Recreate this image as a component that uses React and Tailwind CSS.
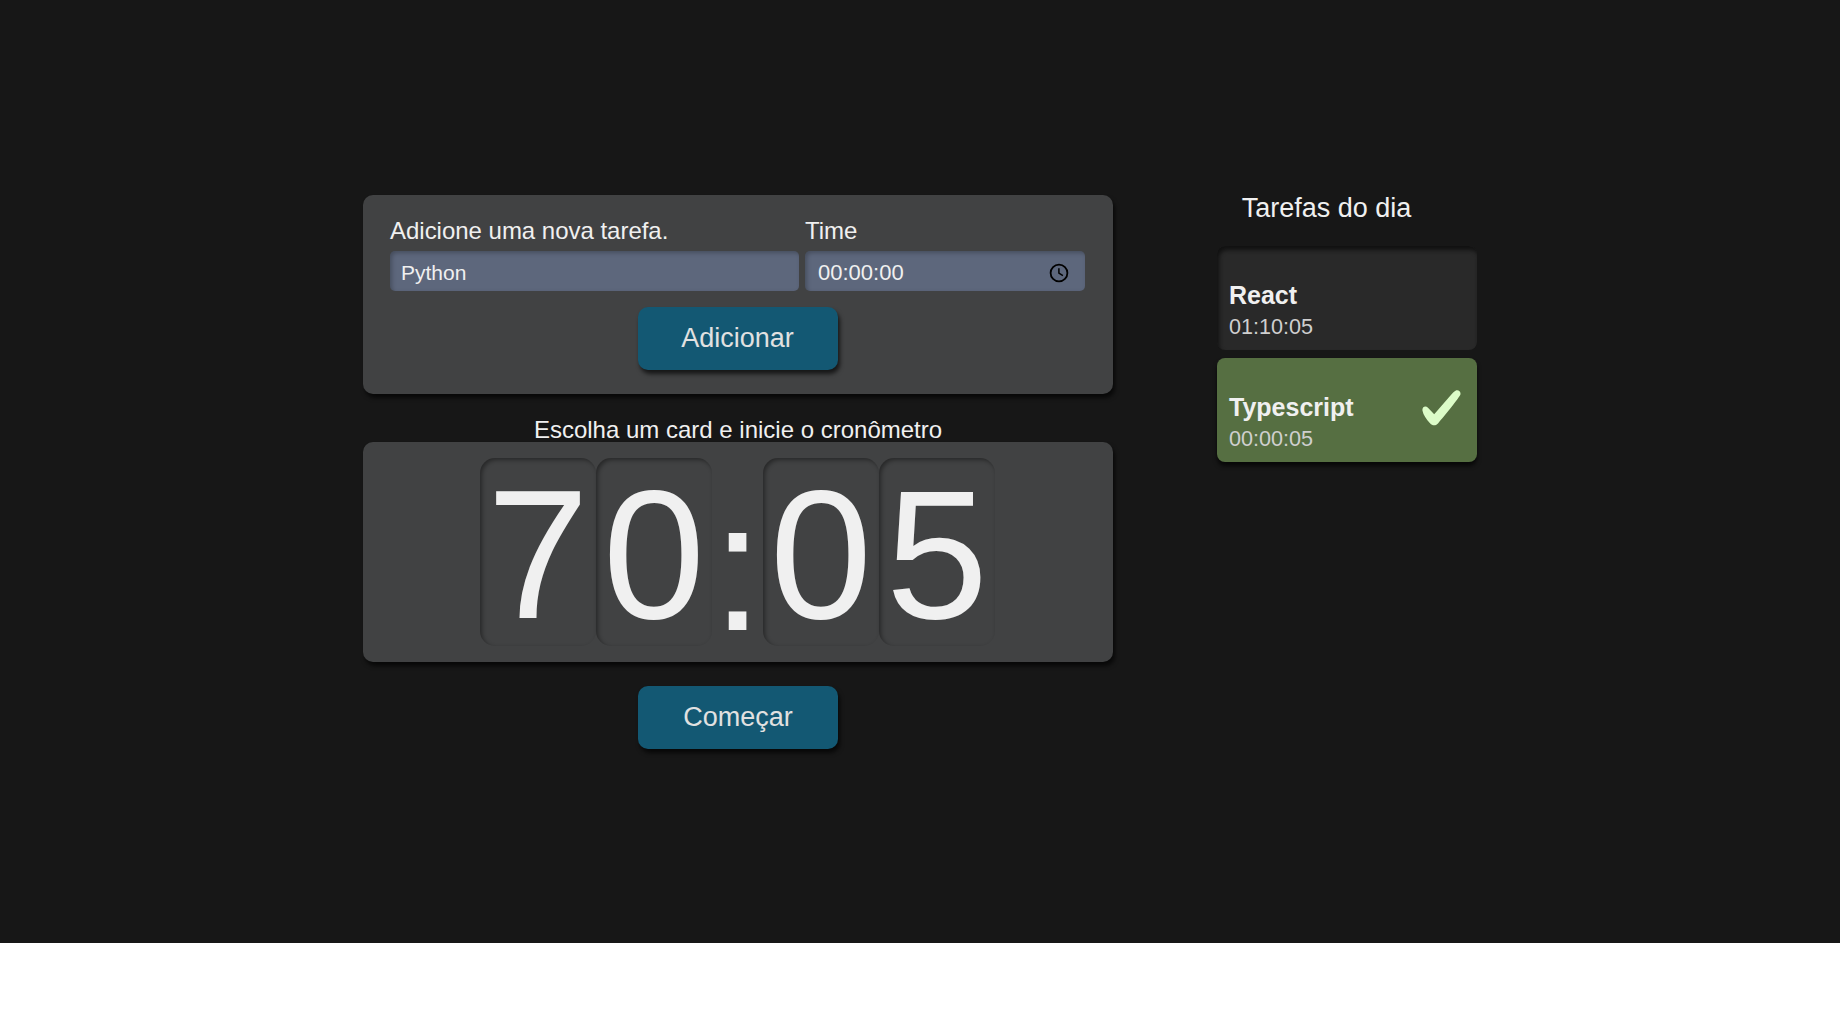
const tasks = [
  { name: 'React', time: '01:10:05', done: false },
  { name: 'Typescript', time: '00:00:05', done: true },
];

function ClockIcon() {
  return (
    <svg className="mt-1 h-5 w-5" viewBox="0 0 20 20" fill="none" stroke="#000" strokeWidth="1.8">
      <circle cx="10" cy="10" r="8.4" />
      <path d="M9.900 5.200v5l4 2.500" strokeWidth="1.5" />
    </svg>
  );
}

function CheckIcon() {
  return (
    <svg className="mt-[-5px] h-9 w-[39px]" viewBox="0 0 39 36" fill="#dcfcc8">
      <path d="M33.500 .8C36.200-.6 39.200 1.600 38.400 4.600C37.600 7.200 22 27 16 33.400C13.400 36 10.600 36 8 33.300C4.300 29.200 1.300 25 .5 20.800C-.2 17 3.400 15.300 6 17.800L12.200 24.200L30 3.800C31.200 2.400 32.200 1.400 33.500 .8Z" />
    </svg>
  );
}

function Button({ children }) {
  return (
    <button className="h-[63px] w-[200px] rounded-[10px] bg-[#135873] pb-px text-[27px] leading-8 text-[#e1e1e1] shadow-[2px_4px_4px_rgba(0,0,0,0.66)]">
      {children}
    </button>
  );
}

function Digit({ children }) {
  return (
    <span className="flex h-[188px] w-[116px] justify-center rounded-[15px] pt-0.5 shadow-[inset_2px_2px_4px_rgba(0,0,0,0.4)]">
      {children}
    </span>
  );
}

function Task({ name, time, done }) {
  return (
    <li
      className={
        done
          ? 'flex h-[104px] items-center justify-between rounded-lg bg-[#566f42] pr-4 pl-3 shadow-[0_4px_4px_rgba(0,0,0,0.66)]'
          : 'flex h-[104px] items-center justify-between rounded-lg bg-[#292929] pr-4 pl-3 shadow-[inset_2px_4px_4px_#111111]'
      }
    >
      <div className="mt-[25px]">
        <h3 className="text-[25px] leading-[33px] font-bold text-[#f0f0f0]">{name}</h3>
        <p className="text-[21.6px] leading-[30px] text-[#cfcfcf]">{time}</p>
      </div>
      {done && <CheckIcon />}
    </li>
  );
}

export default function App() {
  return (
    <div className="min-h-screen bg-white font-['Liberation_Sans',Arial,sans-serif] text-[#f0f0f0]">
      <main className="flex h-[943px] items-start bg-[#171717] pt-[195px] pl-[363px]">
        <div className="flex w-[750px] flex-col items-center">
          <form className="flex h-[199px] w-full flex-col items-center rounded-[10px] bg-[#414243] pt-5 pr-7 pl-[27px] shadow-[2px_4px_4px_rgba(0,0,0,0.66)]">
            <div className="flex w-full gap-1.5">
              <div className="w-[409px]">
                <label className="block h-9 text-2xl leading-8 tracking-[-0.02px]">Adicione uma nova tarefa.</label>
                <div className="flex h-10 items-center rounded-[5px] bg-[#5d677c] px-[11px] pt-[3px] text-[21px] shadow-[inset_2px_2px_4px_rgba(0,0,0,0.25)]">
                  Python
                </div>
              </div>
              <div className="w-[280px]">
                <label className="block h-9 text-2xl leading-8">Time</label>
                <div className="flex h-10 items-center justify-between rounded-[5px] bg-[#5d677c] pr-4 pl-[13px] text-[22px] shadow-[inset_2px_2px_4px_rgba(0,0,0,0.25)]">
                  <span className="pt-0.5">00:00:00</span>
                  <ClockIcon />
                </div>
              </div>
            </div>
            <div className="mt-4">
              <Button>Adicionar</Button>
            </div>
          </form>
          <p className="mt-[22px] h-[26px] text-2xl leading-[27px]">Escolha um card e inicie o cronômetro</p>
          <section className="mb-6 flex h-[220px] w-full justify-center rounded-[10px] bg-[#414243] pt-4 pr-px text-[184px] leading-[188px] shadow-[2px_4px_4px_rgba(0,0,0,0.66)]">
            <Digit>7</Digit>
            <Digit>0</Digit>
            <span className="w-[51px] pt-3.5">:</span>
            <Digit>0</Digit>
            <Digit>5</Digit>
          </section>
          <Button>Começar</Button>
        </div>
        <aside className="ml-[104px] w-[260px]">
          <h2 className="mb-[25px] h-[26px] pr-[41px] text-center text-[27px] leading-[26px]">Tarefas do dia</h2>
          <ul className="flex flex-col gap-2">
            {tasks.map((task) => (
              <Task key={task.name} {...task} />
            ))}
          </ul>
        </aside>
      </main>
    </div>
  );
}
